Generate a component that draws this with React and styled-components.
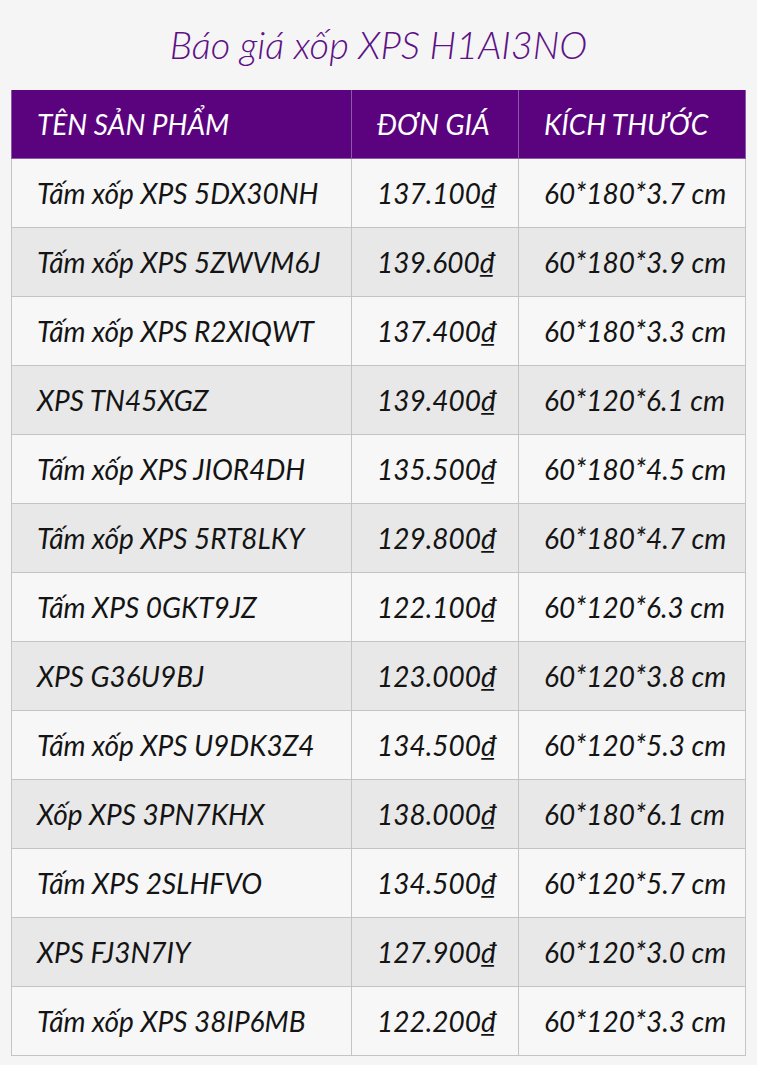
import { createGlobalStyle, styled } from "styled-components";

const GlobalStyle = createGlobalStyle`
    body {
        margin: 0;
        background: #f5f5f5;
        font-family: "Lato", "Open Sans", sans-serif;
    }
`;

const Page = styled.div`
    padding: 20px 11px 10px;
`;

const Title = styled.h1`
    margin: 0 0 22px;
    text-align: center;
    font-size: 38px;
    font-weight: 300;
    font-style: italic;
    color: #5e1086;
    line-height: 48px;
`;

const Table = styled.table`
    width: 100%;
    table-layout: fixed;
    border-collapse: collapse;
    font-style: italic;
    font-weight: 400;
    font-size: 28px;
`;

const HeadCell = styled.th`
    background: #5b037f;
    color: #fff;
    font-weight: 400;
    font-size: 28px;
    text-align: left;
    height: 68px;
    padding: 0 0 0 25px;
    border: 1px solid #8a5aa6;
    border-top: none;
    white-space: nowrap;
    width: ${({ $w }) => $w};
`;

const Row = styled.tr`
    background: ${({ $alt }) => ($alt ? "#e8e8e8" : "#f7f7f7")};
`;

const Cell = styled.td`
    height: 68px;
    padding: 0 0 0 25px;
    border: 1px solid #c4c4c4;
    color: #141414;
    white-space: nowrap;
`;

const rows = [
    ["Tấm xốp XPS 5DX30NH", "137.100", "60*180*3.7 cm"],
    ["Tấm xốp XPS 5ZWVM6J", "139.600", "60*180*3.9 cm"],
    ["Tấm xốp XPS R2XIQWT", "137.400", "60*180*3.3 cm"],
    ["XPS TN45XGZ", "139.400", "60*120*6.1 cm"],
    ["Tấm xốp XPS JIOR4DH", "135.500", "60*180*4.5 cm"],
    ["Tấm xốp XPS 5RT8LKY", "129.800", "60*180*4.7 cm"],
    ["Tấm XPS 0GKT9JZ", "122.100", "60*120*6.3 cm"],
    ["XPS G36U9BJ", "123.000", "60*120*3.8 cm"],
    ["Tấm xốp XPS U9DK3Z4", "134.500", "60*120*5.3 cm"],
    ["Xốp XPS 3PN7KHX", "138.000", "60*180*6.1 cm"],
    ["Tấm XPS 2SLHFVO", "134.500", "60*120*5.7 cm"],
    ["XPS FJ3N7IY", "127.900", "60*120*3.0 cm"],
    ["Tấm xốp XPS 38IP6MB", "122.200", "60*120*3.3 cm"],
];

export default function App() {
    return (
        <Page>
            <GlobalStyle />
            <Title>Báo giá xốp XPS H1AI3NO</Title>
            <Table>
                <thead>
                    <tr>
                        <HeadCell $w="314px">TÊN SẢN PHẨM</HeadCell>
                        <HeadCell $w="141px">ĐƠN GIÁ</HeadCell>
                        <HeadCell>KÍCH THƯỚC</HeadCell>
                    </tr>
                </thead>
                <tbody>
                    {rows.map(([name, price, size], i) => (
                        <Row key={name} $alt={i % 2 === 1}>
                            <Cell>{name}</Cell>
                            <Cell>{price}₫</Cell>
                            <Cell>{size}</Cell>
                        </Row>
                    ))}
                </tbody>
            </Table>
        </Page>
    );
}
